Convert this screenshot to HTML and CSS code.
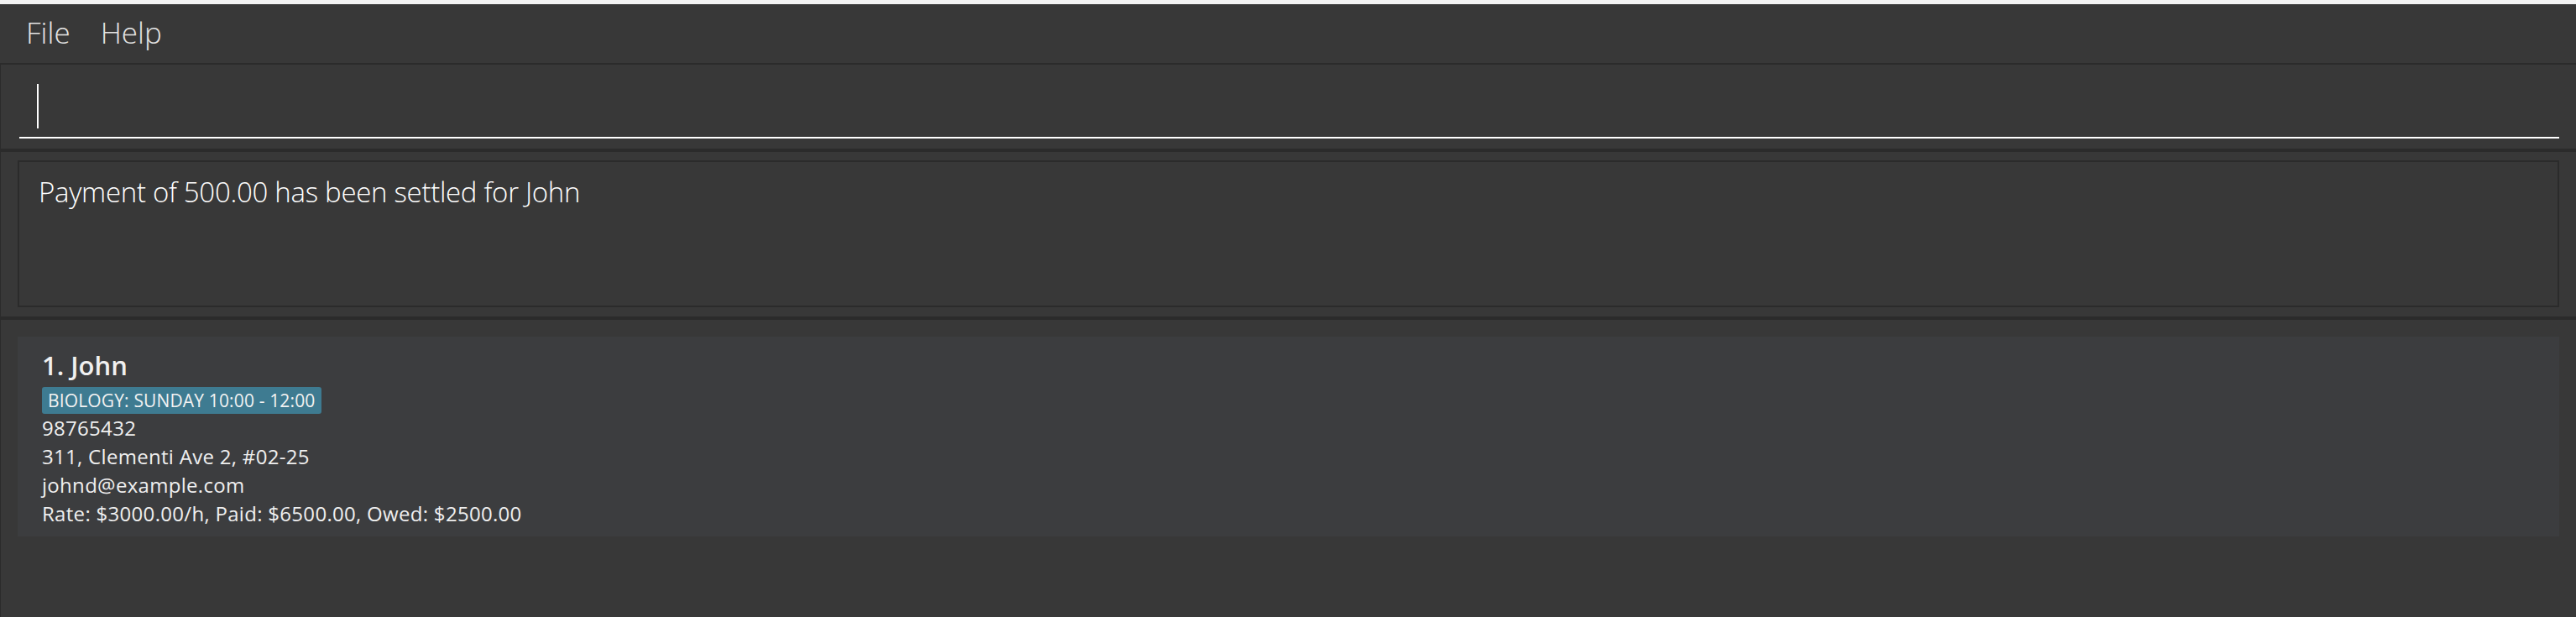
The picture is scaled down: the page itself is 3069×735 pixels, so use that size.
FILE: index.html
```html
<!DOCTYPE html>
<html lang="en">
<head>
<meta charset="utf-8">
<title>Address Book</title>
<link rel="stylesheet" href="styles.css">
</head>
<body>
<div class="window">
  <div class="top-strip"></div>
  <nav class="menubar">
    <span class="menu-item">File</span>
    <span class="menu-item">Help</span>
  </nav>
  <section class="command-pane">
    <div class="command-field"><span class="caret"></span></div>
  </section>
  <section class="result-pane">
    <div class="result-box">Payment of 500.00 has been settled for John</div>
  </section>
  <section class="list-pane">
    <div class="card">
      <div class="card-name">1. John</div>
      <div class="tags"><span class="tag">BIOLOGY: SUNDAY 10:00 - 12:00</span></div>
      <div class="card-line">98765432</div>
      <div class="card-line">311, Clementi Ave 2, #02-25</div>
      <div class="card-line">johnd@example.com</div>
      <div class="card-line">Rate: $3000.00/h, Paid: $6500.00, Owed: $2500.00</div>
    </div>
  </section>
</div>
</body>
</html>
```
FILE: styles.css
```css
html, body {
  margin: 0;
  padding: 0;
  background: #383838;
}
.window {
  width: 3069px;
  height: 735px;
  display: flex;
  flex-direction: column;
  background: #383838;
  font-family: "Open Sans", "DejaVu Sans", sans-serif;
  overflow: hidden;
}
.top-strip {
  height: 5px;
  background: #f3f3f3;
  flex: none;
}
.menubar {
  height: 70px;
  flex: none;
  display: flex;
  align-items: flex-start;
  border-bottom: 2px solid #2b2b2b;
  padding-left: 31px;
  gap: 36px;
}
.menu-item {
  font-size: 35px;
  line-height: 68px;
  font-weight: 300;
  color: #e4e4e4;
}
.command-pane {
  height: 100px;
  flex: none;
  box-sizing: border-box;
  border-left: 1px solid #2b2b2b;
  padding: 23px 20px 10px 22px;
}
.command-field {
  height: 65px;
  border-bottom: 2px solid #ffffff;
  box-sizing: border-box;
  padding-left: 21px;
}
.caret {
  display: block;
  width: 2px;
  height: 53px;
  background: #ffffff;
}
.result-pane {
  flex: none;
  border-top: 4px solid #2b2b2b;
  border-bottom: 4px solid #2b2b2b;
  border-left: 1px solid #2b2b2b;
  padding: 10px 20px 11px 20px;
}
.result-box {
  height: 175px;
  box-sizing: border-box;
  border: 2px solid #2b2b2b;
  padding: 12px 23px;
  font-size: 33px;
  line-height: 47px;
  letter-spacing: -0.3px;
  font-weight: 300;
  color: #ffffff;
}
.list-pane {
  flex: 1;
  border-left: 1px solid #2b2b2b;
  padding: 20px 20px 0 20px;
}
.card {
  background: #3c3d3f;
  height: 238px;
  box-sizing: border-box;
  padding: 14px 29px 0 29px;
  color: #efefef;
}
.card-name {
  font-size: 31px;
  line-height: 40px;
  font-weight: 600;
  color: #f0f0f0;
}
.tags {
  display: flex;
  margin-top: 6px;
}
.tag {
  background: #3e7b91;
  border-radius: 3px;
  font-size: 21px;
  line-height: 32px;
  letter-spacing: 0.15px;
  padding: 0 7px;
  color: #f2f2f2;
}
.card-line {
  font-size: 24px;
  line-height: 33.9px;
  letter-spacing: 0.3px;
}
```
